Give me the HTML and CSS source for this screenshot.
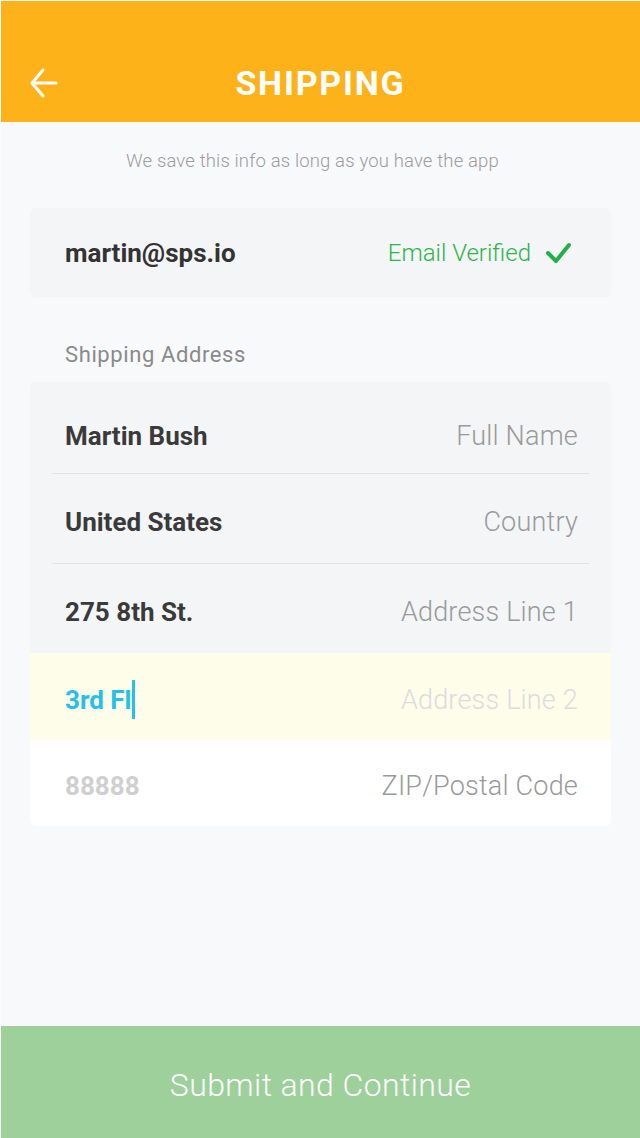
FILE: index.html
```html
<!DOCTYPE html>
<html>
<head>
<meta charset="utf-8">
<title>Shipping</title>
<link rel="stylesheet" href="styles.css">
</head>
<body>
<div class="screen">
  <header class="topbar">
    <button class="back" aria-label="Back">
      <svg width="32" height="32" viewBox="0 0 32 32"><path d="M28 16H4M15 3L4 16l11 13" fill="none" stroke="#fff" stroke-width="3" stroke-linecap="round" stroke-linejoin="round"/></svg>
    </button>
    <h1 class="title">SHIPPING</h1>
  </header>
  <main class="content">
    <p class="note">We save this info as long as you have the app</p>
    <div class="card email-card">
      <span class="email">martin@sps.io</span>
      <span class="verified">Email Verified
        <svg width="26" height="22" viewBox="0 0 26 22"><path d="M3 11l8 8L24 3" fill="none" stroke="#23b04b" stroke-width="4" stroke-linecap="round" stroke-linejoin="round"/></svg>
      </span>
    </div>
    <div class="section-label">Shipping Address</div>
    <div class="card address-card">
      <div class="row r1 divided"><span class="value">Martin Bush</span><span class="ph">Full Name</span></div>
      <div class="row r2 divided"><span class="value">United States</span><span class="ph">Country</span></div>
      <div class="row r3"><span class="value">275 8th St.</span><span class="ph">Address Line 1</span></div>
      <div class="row r4 active"><span class="value typing">3rd Fl<span class="caret"></span></span><span class="ph faint">Address Line 2</span></div>
      <div class="row r5 empty"><span class="value muted">88888</span><span class="ph">ZIP/Postal Code</span></div>
    </div>
  </main>
  <button class="submit">Submit and Continue</button>
</div>
</body>
</html>
```

FILE: styles.css
```css
* { box-sizing: border-box; }
html, body { margin: 0; padding: 0; }
body {
  background: #f8f9fb;
  font-family: Roboto, "Liberation Sans", sans-serif;
}
.screen {
  width: 640px;
  height: 1138px;
  display: flex;
  flex-direction: column;
  border-top: 1px solid rgba(255, 255, 255, 0.45);
  border-left: 1px solid rgba(255, 255, 255, 0.45);
}
.topbar {
  height: 121px;
  background: #fdb21a;
  display: flex;
  align-items: center;
  padding-top: 42px;
  position: relative;
  flex: none;
}
.back {
  position: absolute;
  left: 27px;
  top: 66px;
  background: none;
  border: 0;
  padding: 0;
  width: 32px;
  height: 32px;
}
.title {
  flex: 1;
  margin: 0;
  text-align: center;
  color: #fff;
  font-size: 34px;
  font-weight: 700;
  letter-spacing: 1.8px;
  line-height: 40px;
}
.content {
  flex: 1;
  padding: 0 29px;
}
.note {
  margin: 29px 0 0;
  padding-right: 16px;
  text-align: center;
  font-size: 18.5px;
  line-height: 20px;
  font-weight: 300;
  letter-spacing: 0.15px;
  color: #9c9c9c;
}
.card {
  background: #f4f5f7;
  border-radius: 6px;
}
.email-card {
  margin-top: 37px;
  height: 89px;
  display: flex;
  align-items: center;
  justify-content: space-between;
  padding: 0 40px 0 35px;
}
.email {
  font-size: 26px;
  font-weight: 700;
  color: #333;
}
.verified {
  display: flex;
  align-items: center;
  gap: 14px;
  font-size: 24px;
  font-weight: 300;
  color: #2db34a;
}
.section-label {
  margin-top: 46px;
  padding-left: 35px;
  font-size: 22px;
  line-height: 24px;
  color: #8a8a8a;
  letter-spacing: 0.6px;
}
.address-card {
  margin-top: 15px;
  overflow: hidden;
}
.row {
  display: flex;
  align-items: center;
  justify-content: space-between;
  padding: 6px 33px 0 35px;
  position: relative;
}
.divided::after {
  content: "";
  position: absolute;
  left: 22px;
  right: 22px;
  bottom: 0;
  height: 1px;
  background: #e2e3e5;
}
.r1 { height: 92px; padding-top: 16px; }
.r2 { height: 90px; }
.r3 { height: 89px; }
.r4 { height: 87px; }
.r5 { height: 86px; }
.active { background: #fdfdea; }
.empty { background: #fff; }
.value {
  font-size: 26px;
  font-weight: 700;
  color: #3a3a3a;
  display: flex;
  align-items: center;
}
.typing { color: #25c0e6; }
.muted { color: #cfcfcf; }
.caret {
  display: inline-block;
  width: 3px;
  height: 39px;
  background: #25c0e6;
  margin-left: 1px;
}
.ph {
  font-size: 27px;
  font-weight: 300;
  color: #9a9a9a;
  letter-spacing: 0.2px;
}
.ph.faint { color: #dcdcdc; }
.submit {
  flex: none;
  height: 112px;
  border: 0;
  margin: 0;
  padding: 6px 0 0;
  background: #9dd09b;
  color: #fff;
  font-family: Roboto, "Liberation Sans", sans-serif;
  font-size: 32px;
  font-weight: 300;
  letter-spacing: 0.4px;
  width: 100%;
}
```
